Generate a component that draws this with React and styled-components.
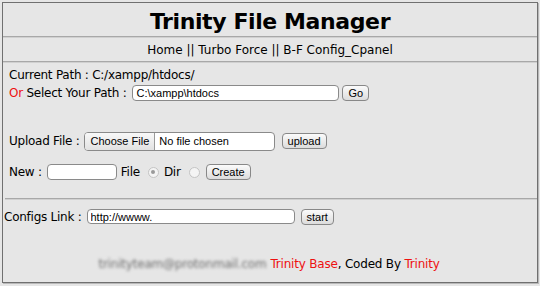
import React from 'react';
import styled, { createGlobalStyle } from 'styled-components';

const GlobalStyle = createGlobalStyle`
    body {
        margin: 0;
        background: #e6e6e6;
        font-family: "DejaVu Sans", "Open Sans", sans-serif;
        color: #000;
    }
`;

// outer table-like frame
const Frame = styled.div`
    margin: 2px;
    width: 534px;
    height: 279px;
    border: 1px solid #707070;
    box-shadow: 1px 1px 0 #b8b8b8;
    display: flex;
    flex-direction: column;
`;

const Title = styled.h1`
    margin: 0;
    height: 33px;
    line-height: 38px;
    text-align: center;
    font-size: 22px;
    font-weight: bold;
    letter-spacing: -0.4px;
`;

const Rule = styled.hr`
    margin: 0;
    height: 0;
    border: none;
    border-top: 1px solid #a8a8a8;
    border-bottom: 1px solid #d0d0d0;
`;

const Nav = styled.div`
    height: 23px;
    line-height: 24px;
    text-align: center;
    font-size: 12px;
`;

const Section = styled.div`
    padding: ${(p) => p.$pad || '0 0 0 6px'};
    display: flex;
    flex-direction: column;
`;

const Row = styled.div`
    display: flex;
    align-items: center;
    height: ${(p) => p.$h || 19}px;
    margin-top: ${(p) => p.$mt || 0}px;
    font-size: 12px;
    letter-spacing: -0.25px;
    white-space: nowrap;
`;

const Red = styled.span`
    color: #ee1111;
`;

const Gap = styled.span`
    display: inline-block;
    width: ${(p) => p.$w}px;
`;

const TextBox = styled.input`
    box-sizing: border-box;
    width: ${(p) => p.$w}px;
    height: ${(p) => p.$h || 16}px;
    margin: 0 0 0 ${(p) => p.$ml || 0}px;
    padding: 0 3px;
    border: 1px solid #8a8a8a;
    border-radius: 4px;
    background: #fff;
    font-family: "Liberation Sans", Arial, sans-serif;
    font-size: 11px;
    letter-spacing: 0;
    color: #000;
    outline: none;
`;

const Button = styled.button`
    box-sizing: border-box;
    height: 16px;
    margin: 0 0 0 ${(p) => p.$ml || 0}px;
    padding: 0 5px;
    border: 1px solid #888;
    border-radius: 4px;
    background: linear-gradient(#fbfbfb, #dcdcdc);
    font-family: "Liberation Sans", Arial, sans-serif;
    font-size: 11px;
    line-height: 14px;
    letter-spacing: 0;
    color: #000;
`;

const FileBox = styled.div`
    box-sizing: border-box;
    display: flex;
    align-items: stretch;
    width: 191px;
    height: 19px;
    margin-left: 4px;
    border: 1px solid #8a8a8a;
    border-radius: 4px;
    background: #fff;
    overflow: hidden;
    font-family: "Liberation Sans", Arial, sans-serif;
    font-size: 11px;
    letter-spacing: 0;
`;

const ChooseBtn = styled.span`
    display: flex;
    align-items: center;
    padding: 0 5px 0 6px;
    border-right: 1px solid #9a9a9a;
    background: linear-gradient(#f8f8f8, #e2e2e2);
`;

const FileName = styled.span`
    display: flex;
    align-items: center;
    padding-left: 4px;
`;

const Radio = styled.span`
    box-sizing: border-box;
    display: inline-flex;
    align-items: center;
    justify-content: center;
    width: 11px;
    height: 11px;
    margin: 0 ${(p) => p.$mr}px 0 ${(p) => p.$ml}px;
    border: 1px solid #c4c4c4;
    border-radius: 50%;
    background: #f4f4f4;
    &::after {
        content: '';
        display: ${(p) => (p.$on ? 'block' : 'none')};
        width: 4px;
        height: 4px;
        border-radius: 50%;
        background: #9a9a9a;
    }
`;

const Footer = styled.div`
    display: flex;
    justify-content: center;
    align-items: center;
    margin-top: 31px;
    padding-right: 2px;
    font-size: 12px;
    letter-spacing: -0.2px;
`;

const Blurred = styled.span`
    color: #6f6f6f;
    filter: blur(1.4px);
    margin-right: 4px;
`;

export default function App() {
    return (
        <>
            <GlobalStyle />
            <Frame>
                <Title>Trinity File Manager</Title>
                <Rule />
                <Nav>Home || Turbo Force || B-F Config_Cpanel</Nav>
                <Rule />
                <Section>
                    <Row $mt={3} $h={17}>Current Path : C:/xampp/htdocs/</Row>
                    <Row>
                        <Red>Or</Red>&nbsp;Select Your Path :
                        <TextBox $w={207} $ml={6} defaultValue="C:\xampp\htdocs" />
                        <Button $ml={3}>Go</Button>
                    </Row>
                    <Row $mt={28} $h={22}>
                        Upload File :
                        <FileBox>
                            <ChooseBtn>Choose File</ChooseBtn>
                            <FileName>No file chosen</FileName>
                        </FileBox>
                        <Button $ml={7}>upload</Button>
                    </Row>
                    <Row $mt={9} $h={22}>
                        New :
                        <TextBox $w={70} $ml={5} />
                        <Gap $w={4} />File
                        <Radio $on $ml={8} $mr={5} />Dir
                        <Radio $ml={8} $mr={6} />
                        <Button>Create</Button>
                    </Row>
                </Section>
                <Section $pad="15px 0 0 2px">
                    <Rule style={{ marginBottom: 7 }} />
                </Section>
                <Section $pad="0 0 0 1px">
                    <Row>
                        Configs Link :
                        <TextBox $w={208} $ml={5} $h={15} defaultValue="http://wwww." />
                        <Button $ml={6}>start</Button>
                    </Row>
                </Section>
                <Footer>
                    <Blurred>trinityteam@protonmail.com</Blurred>
                    <Red>Trinity Base</Red>, Coded By&nbsp;<Red>Trinity</Red>
                </Footer>
            </Frame>
        </>
    );
}
